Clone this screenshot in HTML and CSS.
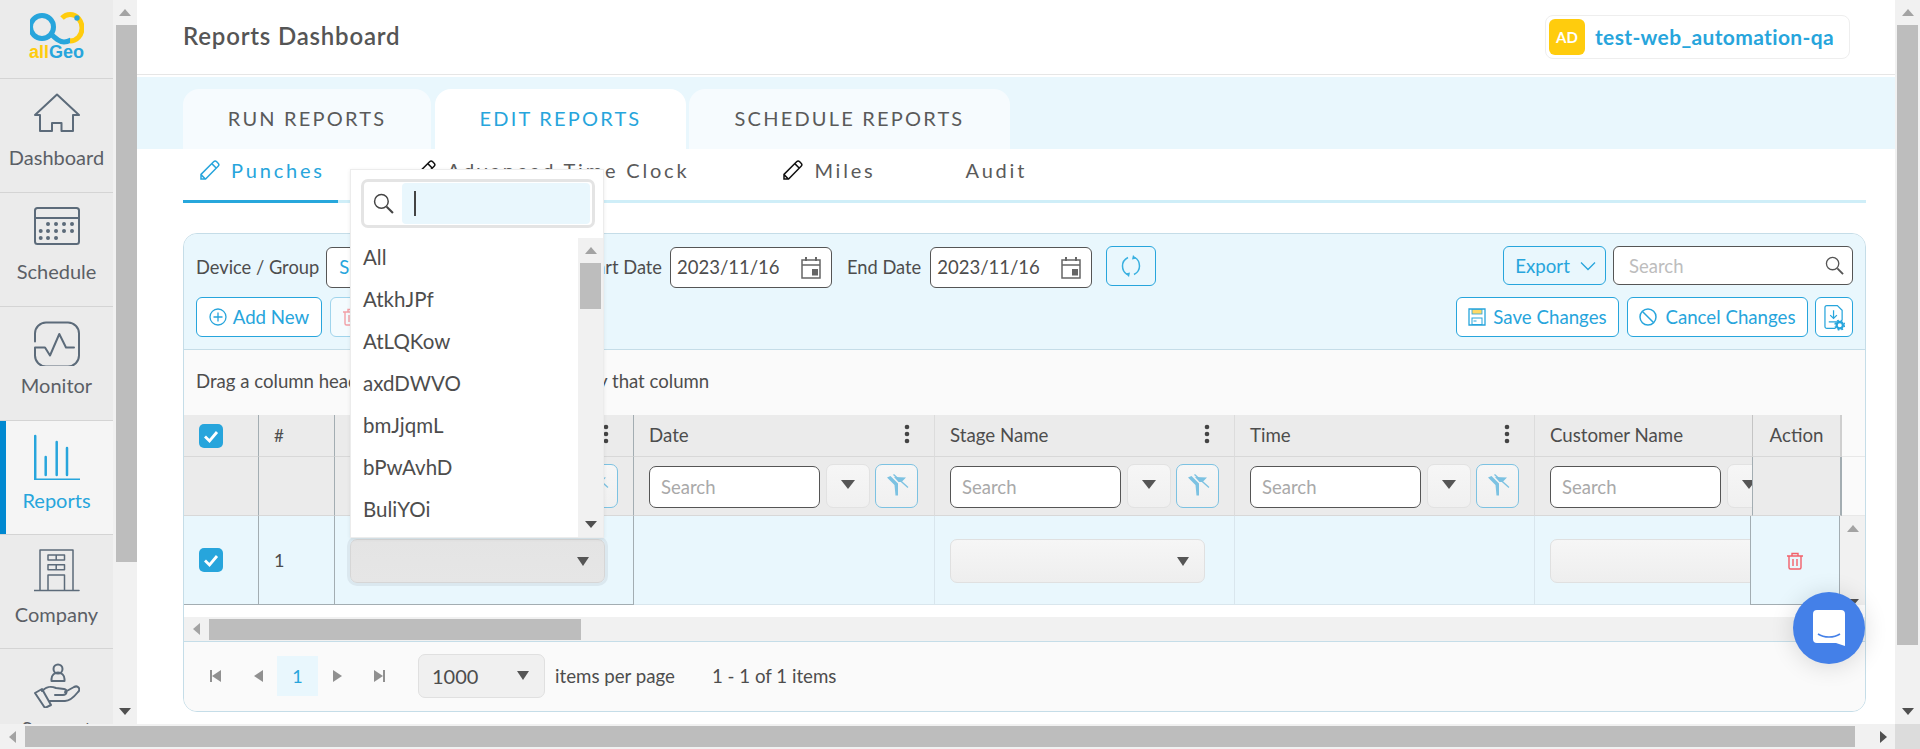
FILE: index.html
```html
<!DOCTYPE html>
<html lang="en">
<head>
<meta charset="utf-8">
<title>Reports Dashboard</title>
<link rel="stylesheet" href="styles.css">
</head>
<body>
<svg class="defs" xmlns="http://www.w3.org/2000/svg">
  <symbol id="pencil" viewBox="0 0 20 20"><path d="M1 19v-4.600L13.600 1.800a2.200 2.200 0 0 1 3.100 0l1.400 1.400a2.200 2.200 0 0 1 0 3.100L5.600 19H1zM11.800 3.600l4.600 4.600M1 14.600l4.400 4.400" fill="none" stroke="currentColor" stroke-width="1.500"/></symbol>
  <symbol id="kebab" viewBox="0 0 6 20"><circle cx="3" cy="3" r="2.300"/><circle cx="3" cy="10" r="2.300"/><circle cx="3" cy="17" r="2.300"/></symbol>
  <symbol id="funnel" viewBox="0 0 22 22"><path d="M0 3.500L3.500 2 11 9.500V21.500H8.500L7.500 11zM7 3l12 .5-4.500 4.500h-3z" fill="#7cc2e2"/><path d="M6.500.5L21 13.500" stroke="#7cc2e2" stroke-width="1.400" fill="none"/></symbol>
  <symbol id="cal" viewBox="0 0 20 23"><path d="M1 4h18v18H1zM1 9h18" fill="none" stroke="#666" stroke-width="1.500"/><path d="M5 1v4M15 1v4" stroke="#666" stroke-width="2"/><rect x="11" y="13" width="6" height="6.500" fill="#666"/></symbol>
  <symbol id="mag" viewBox="0 0 20 20"><circle cx="8" cy="8" r="6.500" fill="none" stroke="currentColor" stroke-width="1.400"/><path d="M13 13l6 6" stroke="currentColor" stroke-width="2"/></symbol>
  <symbol id="trash" viewBox="0 0 18 18"><path d="M1 4h16M6 4V1.500h6V4M3 4v11.500A1.500 1.500 0 0 0 4.500 17h9a1.500 1.500 0 0 0 1.500-1.500V4M7 7v7M11 7v7" fill="none" stroke="currentColor" stroke-width="1.400"/></symbol>
</svg>

<div class="app">
  <nav class="sidebar">
    <div class="logo">
      <svg class="logo-mark" viewBox="0 0 54 36"><circle cx="12" cy="15" r="11.500" fill="none" stroke="#27a5dc" stroke-width="5"/><path d="M21 22c4 4 8 8 13 8 3 0 5-1 7-2" fill="none" stroke="#27a5dc" stroke-width="5"/><path d="M33 5c3-3 6-3.500 8-3.500C48 1.500 53 8 53 15c0 7-5 13-12 13" fill="none" stroke="#ffcc0d" stroke-width="5" transform="translate(-1 1)"/><circle cx="47" cy="6" r="2.700" fill="#27a5dc"/></svg>
      <div class="logo-text"><span class="logo-all">all</span><span class="logo-geo">Geo</span></div>
    </div>
    <a class="nav-item">
      <svg class="nav-icon" viewBox="0 0 46 46"><path d="M6 23H1L23 2.500 45 23h-6v16H27.500v-8H18v8H6z"/></svg>
      <span class="nav-label">Dashboard</span>
    </a>
    <a class="nav-item">
      <svg class="nav-icon" viewBox="0 -1 46 46"><rect x="1" y="1" width="44" height="36" rx="2.500"/><path d="M1 11h44"/><path class="dots" d="M14 17h.01M22 17h.01M30 17h.01M38 17h.01M6.700 24h.01M14 24h.01M22 24h.01M30 24h.01M38 24h.01M6.700 31h.01M14 31h.01M22 31h.01"/></svg>
      <span class="nav-label">Schedule</span>
    </a>
    <a class="nav-item">
      <svg class="nav-icon" viewBox="0 -1.500 46 46"><path d="M1 20v-8A11 11 0 0 1 12 1h22a11 11 0 0 1 11 11v22a11 11 0 0 1-11 11H12A11 11 0 0 1 1 34v-8h10l5 8 9.300-21.500L32 26h8"/></svg>
      <span class="nav-label">Monitor</span>
    </a>
    <a class="nav-item is-active">
      <svg class="nav-icon" viewBox="0 -1 46 46"><path d="M1.200 1v43.800H46" stroke-width="2.500"/><path d="M11.700 22v18M22.700 7v33M33 13v27" stroke-width="2.500"/></svg>
      <span class="nav-label">Reports</span>
    </a>
    <a class="nav-item item-low">
      <svg class="nav-icon" viewBox="0 0 46 46"><path d="M6 42V2h33v40M0 42.500h45M14 7h16.500v5H14zM14 16.700h16.500v5H14zM22.200 7v5M22.200 16.700v5M14 42V27h16.500v15" stroke-width="1.500"/></svg>
      <span class="nav-label">Company</span>
    </a>
    <a class="nav-item item-low">
      <svg class="nav-icon" viewBox="0 0 46 46"><circle cx="24" cy="7" r="4.500"/><path d="M17.500 19v-2a6.500 6.500 0 0 1 13 0v2z"/><path d="M1 31l7-4 9 16-6 3zM8 29c5-5 9-5 14-3l8 1c4 1 3 6-1 6h-8M31 30l9-5c4-2 7 2 4 5-4 5-8 9-13 9H16"/></svg>
      <span class="nav-label">Support</span>
    </a>
  </nav>

  <div class="vbar vbar-nav">
    <span class="arrow up"></span>
    <span class="thumb thumb-nav"></span>
    <span class="bar-rest"></span>
    <span class="arrow down"></span>
  </div>

  <main class="main">
    <header class="topbar">
      <h1 class="page-title">Reports Dashboard</h1>
      <div class="user-chip"><span class="avatar">AD</span><span class="user-name">test-web_automation-qa</span></div>
    </header>

    <div class="tab-band">
      <a class="tab tab-run">RUN REPORTS</a>
      <a class="tab tab-edit is-active">EDIT REPORTS</a>
      <a class="tab tab-sched">SCHEDULE REPORTS</a>
    </div>

    <div class="subtabs">
      <a class="subtab is-active"><svg class="pencil"><use href="#pencil"/></svg>Punches</a>
      <a class="subtab"><svg class="pencil"><use href="#pencil"/></svg>Advanced Time Clock</a>
      <a class="subtab"><svg class="pencil"><use href="#pencil"/></svg>Miles</a>
      <a class="subtab subtab-audit">Audit</a>
    </div>

    <section class="panel">
      <div class="toolbar">
        <div class="tool-left">
          <div class="tool-row">
            <label class="tool-label">Device / Group</label>
            <div class="group-select">Select</div>
            <label class="tool-label label-start">Start Date</label>
            <div class="date-box"><span>2023/11/16</span><svg class="cal"><use href="#cal"/></svg></div>
            <label class="tool-label label-end">End Date</label>
            <div class="date-box"><span>2023/11/16</span><svg class="cal"><use href="#cal"/></svg></div>
            <button class="btn btn-refresh"><svg class="refresh" viewBox="0 0 20 22"><path d="M7 2.500C3 4.500 1.500 7.500 1.500 11c0 3.500 1.500 6.500 4.500 8.500M13 19.500c4-2 5.500-5 5.500-8.500 0-3.500-1.500-6.500-4.500-8.500" fill="none" stroke="#39b0e0" stroke-width="1.500"/><path d="M12 0l3.500 3.500-4.500 1zM8 22l-3.500-3.500 4.500-1z" fill="#39b0e0"/></svg></button>
          </div>
          <div class="tool-row tool-row-2">
            <button class="btn btn-add"><svg class="plus" viewBox="0 0 18 18"><circle cx="9" cy="9" r="8" fill="none" stroke="currentColor" stroke-width="1.300"/><path d="M9 4.500v9M4.500 9h9" stroke="currentColor" stroke-width="1.300"/></svg>Add New</button>
            <button class="btn btn-del"><svg class="trash-sm"><use href="#trash"/></svg>Delete</button>
          </div>
        </div>
        <div class="tool-right">
          <div class="tool-row tool-row-end">
            <button class="btn btn-export">Export<svg class="chev" viewBox="0 0 16 10"><path d="M1 1.500l7 7 7-7" fill="none" stroke="currentColor" stroke-width="1.300"/></svg></button>
            <div class="search-box"><input class="search-input" placeholder="Search"><svg class="mag"><use href="#mag"/></svg></div>
          </div>
          <div class="tool-row tool-row-end tool-row-2">
            <button class="btn btn-save"><svg class="ico-save" viewBox="0 0 18 18"><path d="M1 1h16v16H1z" fill="none" stroke="#27a5dc" stroke-width="1.300"/><rect x="4" y="1.500" width="10" height="4.500" fill="#ffd966" stroke="#27a5dc" stroke-width=".8"/><rect x="4" y="10" width="10" height="6.500" fill="none" stroke="#27a5dc" stroke-width="1"/><path d="M5.500 13h3" stroke="#27a5dc"/></svg>Save Changes</button>
            <button class="btn btn-cancel"><svg class="ico-cancel" viewBox="0 0 18 18"><circle cx="9" cy="9" r="8" fill="none" stroke="currentColor" stroke-width="1.500"/><path d="M3.500 3.500l11 11" stroke="currentColor" stroke-width="1.500"/></svg>Cancel Changes</button>
            <button class="btn btn-docgear"><svg class="ico-doc" viewBox="0 0 22 27"><path d="M12 25H3a2 2 0 0 1-2-2V3a2 2 0 0 1 2-2h11l5 5v10" fill="none" stroke="currentColor" stroke-width="1.300"/><path d="M10 6v8M6.500 11l3.500 3.500 3.500-3.500M5 18h9" fill="none" stroke="currentColor" stroke-width="1.300"/><circle cx="16.500" cy="21.500" r="3.300" fill="none" stroke="currentColor" stroke-width="2.400"/><circle cx="16.500" cy="21.500" r="5" fill="none" stroke="currentColor" stroke-width="1.500" stroke-dasharray="2 2"/></svg></button>
          </div>
        </div>
      </div>

      <div class="group-hint">Drag a column header and drop it here to group by that column</div>

      <div class="table-wrap">
        <div class="grid">
          <div class="th dark chk-cell"><span class="check"><svg viewBox="0 0 24 24"><path d="M6 12.500l4.500 4.500L18 8" fill="none" stroke="#fff" stroke-width="2.800"/></svg></span></div>
          <div class="th dark num-cell">#</div>
          <div class="th dark col-main"><span class="th-title"></span><svg class="kebab"><use href="#kebab"/></svg></div>
          <div class="th col-main"><span class="th-title">Date</span><svg class="kebab"><use href="#kebab"/></svg></div>
          <div class="th col-main"><span class="th-title">Stage Name</span><svg class="kebab"><use href="#kebab"/></svg></div>
          <div class="th col-main"><span class="th-title">Time</span><svg class="kebab"><use href="#kebab"/></svg></div>
          <div class="th col-main no-right"><span class="th-title">Customer Name</span></div>

          <div class="tf dark"></div>
          <div class="tf dark"></div>
          <div class="tf dark col-main"><input class="f-input" placeholder="Search"><span class="f-dd"><i class="tri"></i></span><span class="f-clear"><svg><use href="#funnel"/></svg></span></div>
          <div class="tf col-main"><input class="f-input" placeholder="Search"><span class="f-dd"><i class="tri"></i></span><span class="f-clear"><svg><use href="#funnel"/></svg></span></div>
          <div class="tf col-main"><input class="f-input" placeholder="Search"><span class="f-dd"><i class="tri"></i></span><span class="f-clear"><svg><use href="#funnel"/></svg></span></div>
          <div class="tf col-main"><input class="f-input" placeholder="Search"><span class="f-dd"><i class="tri"></i></span><span class="f-clear"><svg><use href="#funnel"/></svg></span></div>
          <div class="tf col-main no-right"><input class="f-input" placeholder="Search"><span class="f-dd"><i class="tri"></i></span><span class="f-clear"><svg><use href="#funnel"/></svg></span></div>

          <div class="td dark chk-cell"><span class="check"><svg viewBox="0 0 24 24"><path d="M6 12.500l4.500 4.500L18 8" fill="none" stroke="#fff" stroke-width="2.800"/></svg></span></div>
          <div class="td dark num-cell">1</div>
          <div class="td dark col-main td-focus"><span class="cell-select is-focus"><i class="tri"></i></span></div>
          <div class="td col-main"></div>
          <div class="td col-main"><span class="cell-select"><i class="tri"></i></span></div>
          <div class="td col-main"></div>
          <div class="td col-main no-right"><span class="cell-select"><i class="tri"></i></span></div>
        </div>

        <div class="frozen">
          <div class="fz-row fz-head"><div class="fz-cell">Action</div><span class="fz-fill"></span></div>
          <div class="fz-row fz-filter"><div class="fz-cell"></div><span class="fz-fill"></span></div>
          <div class="fz-row fz-data">
            <div class="fz-cell"><svg class="trash-lg"><use href="#trash"/></svg></div>
            <div class="vbar vbar-data"><span class="arrow up"></span><span class="bar-rest"></span><span class="arrow down"></span></div>
          </div>
        </div>
      </div>

      <div class="table-gap"></div>
      <div class="hbar hbar-table">
        <span class="arrow left"></span>
        <span class="thumb thumb-table"></span>
      </div>

      <div class="pager">
        <span class="pg-ico pg-first"></span>
        <span class="pg-ico pg-prev"></span>
        <span class="pg-num">1</span>
        <span class="pg-ico pg-next"></span>
        <span class="pg-ico pg-last"></span>
        <span class="pg-size"><span>1000</span><i class="tri"></i></span>
        <span class="pg-text">items per page</span>
        <span class="pg-text pg-info">1 - 1 of 1 items</span>
      </div>
    </section>

    <div class="dropdown">
      <div class="dd-search">
        <div class="dd-search-box">
          <svg class="dd-mag"><use href="#mag"/></svg>
          <div class="dd-field"><span class="caret"></span></div>
        </div>
      </div>
      <div class="dd-body">
        <ul class="dd-list">
          <li>All</li>
          <li>AtkhJPf</li>
          <li>AtLQKow</li>
          <li>axdDWVO</li>
          <li>bmJjqmL</li>
          <li>bPwAvhD</li>
          <li>BuliYOi</li>
        </ul>
        <div class="vbar vbar-dd">
          <span class="arrow up"></span>
          <span class="thumb thumb-dd"></span>
          <span class="bar-rest"></span>
          <span class="arrow down"></span>
        </div>
      </div>
    </div>
  </main>

  <div class="vbar vbar-page">
    <span class="arrow up"></span>
    <span class="thumb thumb-page"></span>
    <span class="bar-rest"></span>
    <span class="arrow down"></span>
  </div>

  <div class="hbar hbar-page">
    <span class="arrow left"></span>
    <span class="thumb thumb-pageh"></span>
    <span class="bar-rest"></span>
    <span class="arrow right"></span>
  </div>
  <div class="corner"></div>

  <div class="chat">
    <svg viewBox="0 0 32 36"><path d="M4 0h24a4 4 0 0 1 4 4v32l-9-3H4a4 4 0 0 1-4-4V4a4 4 0 0 1 4-4z" fill="#fff"/><path d="M5 24c6 4 16 4 22 0" fill="none" stroke="#4480e8" stroke-width="1.600"/></svg>
  </div>
</div>
</body>
</html>
```
FILE: styles.css
```css
* { box-sizing: border-box; }
html, body { margin: 0; padding: 0; height: 100%; overflow: hidden; background: #fff; }
body { font-family: Lato, "Open Sans", sans-serif; color: #4d4d4d; font-size: 16px; }
.defs { display: none; }
button { font: inherit; cursor: pointer; }
input { font: inherit; outline: none; }

.app {
  position: relative;
  display: grid;
  grid-template-columns: 113px 24px 1758px 25px;
  grid-template-rows: 724px 25px;
  width: 1920px;
  height: 749px;
  overflow: hidden;
}

/* sidebar */
.sidebar { background: #ebebeb; overflow: hidden; }
.logo { height: 79px; border-bottom: 1px solid #d4d4d4; display: flex; flex-direction: column; align-items: center; padding-top: 12px; }
.logo-mark { width: 54px; height: 36px; display: block; }
.logo-text { font-family: "Liberation Sans", Arial, sans-serif; font-size: 18px; font-weight: 700; line-height: 14px; margin-top: -3px; }
.logo-all { color: #ffcc0d; }
.logo-geo { color: #27a5dc; }
.nav-item { height: 114px; border-bottom: 1px solid #d4d4d4; display: flex; flex-direction: column; align-items: center; padding-top: 13px; color: #5a6672; }
.nav-icon { width: 46px; height: 46px; fill: none; stroke: #5c6b7a; stroke-width: 2; stroke-linejoin: round; stroke-linecap: round; display: block; }
.nav-icon .dots { stroke-width: 4; }
.nav-label { font-size: 20px; line-height: 24px; margin-top: 7px; color: #5b5f66; }
.item-low .nav-label, .nav-item.is-active .nav-label { margin-top: 8px; }
.nav-item.is-active { background: #f5f5f5; box-shadow: inset 6px 0 0 #0088d0; }
.is-active .nav-icon { stroke: #27a5dc; }
.is-active .nav-label { color: #27a5dc; }

/* scrollbars */
.vbar { background: #f1f1f1; display: flex; flex-direction: column; align-items: center; }
.hbar { background: #f1f1f1; display: flex; align-items: center; }
.arrow { flex: none; width: 25px; height: 25px; position: relative; display: block; }
.arrow::after { content: ""; position: absolute; left: 50%; top: 50%; width: 0; height: 0; border-style: solid; }
.arrow.up::after { margin: -4px 0 0 -6px; border-width: 0 6px 7px; border-color: transparent transparent #a3a3a3; }
.arrow.down::after { margin: -4px 0 0 -6px; border-width: 7px 6px 0; border-color: #505050 transparent transparent; }
.arrow.left::after { margin: -6px 0 0 -4px; border-width: 6px 7px 6px 0; border-color: transparent #a3a3a3 transparent transparent; }
.arrow.right::after { margin: -6px 0 0 -3px; border-width: 6px 0 6px 7px; border-color: transparent transparent transparent #505050; }
.thumb { display: block; background: #bdbdbd; flex: none; }
.bar-rest { flex: 1; }
.thumb-nav { width: 21px; height: 537px; }
.vbar-nav { align-items: center; padding-left: 3px; }
.vbar-nav .arrow { margin-left: -3px; }
.thumb-page { width: 21px; height: 620px; }
.thumb-pageh { height: 21px; width: 1830px; }
.hbar-page { grid-column: 1 / span 3; height: 25px; }
.corner { background: #dcdcdc; }

/* main */
.main { position: relative; background: #fff; overflow: hidden; min-width: 0; }
.topbar { height: 75px; margin-bottom: 2px; border-bottom: 1px solid #e6e6e6; display: flex; align-items: center; justify-content: space-between; padding: 0 45px 0 46px; }
.page-title { margin: -3px 0 0; font-size: 24px; font-weight: 600; letter-spacing: .8px; color: #555; }
.user-chip { height: 44px; width: 305px; border: 1px solid #eee; border-radius: 8px; display: flex; align-items: center; padding-left: 3px; }
.avatar { width: 36px; height: 36px; border-radius: 6px; background: #ffcc0d; color: #fff; font-weight: 700; font-size: 15px; display: flex; align-items: center; justify-content: center; }
.user-name { margin: -1px 0 0 10px; color: #27a5dc; font-size: 21px; font-weight: 700; letter-spacing: .35px; white-space: nowrap; }

.tab-band { height: 72px; background: #e9f7fd; display: flex; padding: 12px 0 0 46px; align-items: stretch; }
.tab { border-radius: 16px 16px 0 0; background: #f6fbfe; color: #5a5a5a; font-size: 20px; letter-spacing: 2.200px; display: flex; align-items: center; justify-content: center; padding-bottom: 2px; }
.tab-run { width: 248px; margin-right: 4px; }
.tab-edit { width: 251px; margin-right: 3px; }
.tab-sched { width: 321px; }
.tab.is-active { background: #fff; color: #27a5dc; }

.subtabs { height: 54px; margin: 0 29px 0 46px; border-bottom: 3px solid #cfeef8; display: flex; align-items: stretch; gap: 61px; }
.subtab { display: flex; align-items: center; padding: 0 16px 9px 17px; font-size: 20px; letter-spacing: 2.800px; color: #5a5a5a; margin-bottom: -3px; border-bottom: 3px solid transparent; white-space: nowrap; }
.subtab.is-active { color: #27a5dc; border-bottom-color: #27a7dc; width: 155px; padding-right: 0; }
.subtab-audit { margin-left: -4px; }
.pencil { width: 20px; height: 20px; margin-right: 11px; color: #111; }
.is-active .pencil { color: #27a5dc; }

.panel { margin: 30px 29px 0 46px; height: 479px; border: 1px solid #c5dde8; border-radius: 14px; overflow: hidden; background: #fafafa; display: flex; flex-direction: column; }
.toolbar { height: 116px; background: #e9f7fd; border-bottom: 1px solid #c5dde8; display: flex; justify-content: space-between; padding: 12px 12px 0; flex: none; }
.tool-row { display: flex; align-items: center; height: 42px; }
.tool-row-2 { margin-top: 9px; height: 40px; }
.tool-row-end { justify-content: flex-end; align-items: flex-start; gap: 7px; }
.tool-label { font-size: 18.300px; color: #4d4d4d; white-space: nowrap; }
.group-select { width: 210px; height: 41px; margin-left: 7px; border: 1px solid #555; border-radius: 6px; background: #fff; color: #27a5dc; padding: 0 12px; display: flex; align-items: center; font-size: 18.500px; flex: none; }
.label-start { margin-left: 44px; margin-right: 8px; }
.label-end { margin: 0 9px 0 15px; }
.date-box { width: 162px; height: 41px; border: 1px solid #555; border-radius: 6px; background: #fff; display: flex; align-items: center; justify-content: space-between; padding: 0 10px 0 6px; font-size: 18.500px; color: #4d4d4d; flex: none; }
.cal { width: 20px; height: 23px; }
.btn { background: #fff; border: 1px solid #27a5dc; border-radius: 6px; color: #27a5dc; display: inline-flex; align-items: center; justify-content: center; padding: 0; height: 40px; font-size: 18.700px; white-space: nowrap; flex: none; }
.btn-refresh { width: 50px; margin-left: 14px; background: transparent; margin-top: -3px; }
.refresh { width: 20px; height: 22px; }
.btn-add { width: 126px; }
.plus { width: 18px; height: 18px; margin-right: 6px; }
.btn-del { width: 110px; margin-left: 8px; color: #f2a0a6; border-color: #9fd4ec; background: #f4fbfe; justify-content: flex-start; padding-left: 11px; }
.trash-sm { width: 18px; height: 18px; color: #f2a0a6; margin-right: 6px; }
.btn-export { width: 103px; height: 39px; background: transparent; padding-left: 2px; }
.chev { width: 16px; height: 10px; margin-left: 10px; }
.search-box { width: 240px; height: 39px; border: 1px solid #555; border-radius: 6px; background: #fff; display: flex; align-items: center; padding: 0 8px 0 15px; }
.search-input { border: 0; flex: 1; min-width: 0; padding: 0; font-size: 18.500px; background: transparent; color: #444; }
.search-input::placeholder { color: #bdbdbd; }
.mag { width: 19px; height: 19px; color: #555; }
.btn-save { width: 163px; margin-right: 1px; }
.btn-cancel { width: 181px; }
.btn-docgear { width: 38px; }
.ico-save { width: 18px; height: 18px; margin-right: 7px; }
.ico-cancel { width: 18px; height: 18px; margin-right: 8px; }
.ico-doc { width: 21px; height: 27px; }

.group-hint { height: 65px; padding: 0 0 3px 12px; display: flex; align-items: center; font-size: 18.600px; color: #4d4d4d; flex: none; background: #fafafa; }

.table-wrap { position: relative; height: 190px; overflow: hidden; flex: none; background: #fff; }
.grid { display: grid; grid-template-columns: 75px 76px 299px 301px 300px 300px 300px; grid-template-rows: 42px 59px 89px; width: 1651px; }
.th, .tf { background: #ebebeb; border-right: 1px solid #dcdcdc; border-bottom: 1px solid #d8d8d8; display: flex; align-items: center; }
.th { padding: 0 24px 2px 15px; font-size: 18.700px; color: #4d4d4d; }
.tf { padding: 0 15px 0 15px; gap: 6px; }
.td { background: #e9f7fd; border-right: 1px solid #d9e6ed; border-bottom: 1px solid #d9e6ed; display: flex; align-items: center; padding: 2px 29px 0 15px; font-size: 18px; }
.td-focus { padding-right: 28px; }
.dark { border-right-color: #a3adb2; }
.td.dark { border-bottom-color: #a3adb2; }
.no-right { border-right: 0; }
.chk-cell { padding: 0 0 0 15px; }
.td.chk-cell { padding-top: 0; }
.num-cell { padding: 0 0 0 15px; }
.th.num-cell { font-size: 17px; padding-left: 15px; }
.check { width: 24px; height: 24px; border-radius: 5px; background: #27a5dc; display: block; }
.check svg { display: block; width: 24px; height: 24px; }
.th-title { flex: 1; white-space: nowrap; }
.kebab { width: 6px; height: 20px; fill: #444; flex: none; margin-top: -1px; }
.f-input { flex: none; width: 171px; min-width: 0; height: 42px; border: 1px solid #555; border-radius: 7px; background: #fff; padding: 0 11px; font-size: 18.500px; color: #444; margin-top: 1px; }
.dark .f-input { flex: 1; }
.f-input::placeholder { color: #a9a9a9; }
.f-dd, .f-clear { flex: none; width: 44px; height: 44px; border: 1px solid #e2e2e2; border-radius: 7px; background: linear-gradient(#f6f6f6, #f0f0f0); display: flex; align-items: center; justify-content: center; }
.f-clear { width: 43px; margin-left: -1px; border-color: #7cc2e2; }
.f-clear svg { width: 22px; height: 22px; margin: -3px 0 0 2px; }
.tri { display: block; width: 0; height: 0; border-style: solid; border-width: 9px 6.500px 0; border-color: #555 transparent transparent; }
.f-dd .tri { border-width: 9px 7px 0; margin-top: -4px; }
.cell-select { flex: 1; height: 44px; border: 1px solid #e0e0e0; border-radius: 7px; background: linear-gradient(#f6f6f6, #eeeeee); display: flex; align-items: center; justify-content: flex-end; padding-right: 15px; }
.cell-select .tri { border-width: 9px 6px 0; }
.cell-select.is-focus { background: linear-gradient(#e4e4e4, #e6e6e6); box-shadow: 0 0 0 3px #dbe8ef; border-color: #d6d6d6; }

.frozen { position: absolute; top: 0; right: 0; width: 115px; height: 190px; display: flex; flex-direction: column; }
.fz-row { display: flex; flex: none; }
.fz-head { height: 42px; padding-left: 2px; }
.fz-filter { height: 59px; padding-left: 2px; }
.fz-data { height: 89px; }
.fz-cell { width: 90px; flex: none; background: #ebebeb; border-left: 1px solid #c4c4c4; border-right: 2px solid #cfcfcf; border-bottom: 1px solid #d8d8d8; display: flex; align-items: center; justify-content: center; font-size: 18.700px; color: #4d4d4d; }
.fz-head .fz-cell { padding-bottom: 2px; }
.fz-filter .fz-cell { border-left-color: #a3adb2; border-right-color: #a3adb2; }
.fz-fill { flex: 1; background: #fafafa; border-bottom: 1px solid #e8e8e8; }
.fz-data .fz-cell { background: #e9f7fd; border-left: 1px solid #a3adb2; border-right: 1px solid #a3adb2; border-bottom: 1px solid #a3adb2; padding-top: 2px; }
.trash-lg { width: 18px; height: 18px; color: #f2606a; }
.vbar-data { width: 25px; }
.vbar-data .arrow.down { margin-bottom: -10px; }

.table-gap { height: 12px; flex: none; background: #fff; }
.hbar-table { height: 25px; flex: none; border-bottom: 1px solid #c5dde8; }
.hbar-table .arrow.left { width: 25px; }
.thumb-table { width: 372px; height: 21px; }
.pager { flex: 1; display: flex; align-items: center; padding: 0 0 2px 26px; background: #fafafa; font-size: 18.700px; color: #4d4d4d; }
.pg-ico { width: 11px; height: 12px; position: relative; display: block; flex: none; }
.pg-first::before, .pg-last::before { content: ""; position: absolute; top: 0; width: 2px; height: 12px; background: #909090; }
.pg-first::before { left: 0; }
.pg-last::before { right: 0; }
.pg-ico::after { content: ""; position: absolute; top: 0; width: 0; height: 0; border-style: solid; }
.pg-first::after, .pg-prev::after { border-width: 6px 9px 6px 0; border-color: transparent #909090 transparent transparent; right: 0; }
.pg-next::after, .pg-last::after { border-width: 6px 0 6px 9px; border-color: transparent transparent transparent #909090; left: 0; }
.pg-prev { margin-left: 31px; }
.pg-num { width: 41px; height: 40px; margin-left: 14px; background: #e9f7fd; color: #27a5dc; display: flex; align-items: center; justify-content: center; font-size: 18px; }
.pg-next { margin-left: 15px; }
.pg-last { margin-left: 30px; }
.pg-size { width: 127px; height: 44px; margin-left: 33px; border: 1px solid #e0e0e0; border-radius: 7px; background: #f0f0f0; display: flex; align-items: center; justify-content: space-between; padding: 0 15px 0 13px; font-size: 20px; }
.pg-text { margin-left: 10px; }
.pg-info { margin-left: 37px; }

/* dropdown list */
.dropdown { position: absolute; left: 213px; top: 169px; width: 254px; height: 369px; background: #fff; border: 1px solid #ececec; box-shadow: 0 1px 4px rgba(0,0,0,.08); display: flex; flex-direction: column; }
.dd-search { height: 68px; padding: 9px 9px 0 10px; flex: none; }
.dd-search-box { width: 234px; height: 49px; border: 3px solid #e4e4e4; border-radius: 7px; background: #fff; display: flex; align-items: stretch; padding: 1px 2px 1px 0; }
.dd-mag { width: 21px; height: 21px; color: #444; margin: 10px 8px 0 9px; flex: none; }
.dd-field { flex: 1; background: #e9f7fd; border-radius: 4px; position: relative; display: flex; align-items: center; padding-left: 12px; }
.caret { display: block; width: 2px; height: 25px; background: #444; }
.dd-body { flex: 1; display: flex; min-height: 0; }
.dd-list { flex: 1; margin: -2px 0 0; padding: 0 0 0 12px; list-style: none; overflow: hidden; font-size: 20.500px; color: #4d4d4d; }
.dd-list li { height: 42px; line-height: 42px; }
.vbar-dd { width: 25px; flex: none; }
.thumb-dd { width: 21px; height: 46px; }

/* chat launcher */
.chat { position: absolute; left: 1793px; top: 592px; width: 72px; height: 72px; border-radius: 50%; background: #4480e8; box-shadow: 0 2px 24px rgba(0,0,0,.14); display: flex; align-items: center; justify-content: center; }
.chat svg { width: 32px; height: 36px; }
```
